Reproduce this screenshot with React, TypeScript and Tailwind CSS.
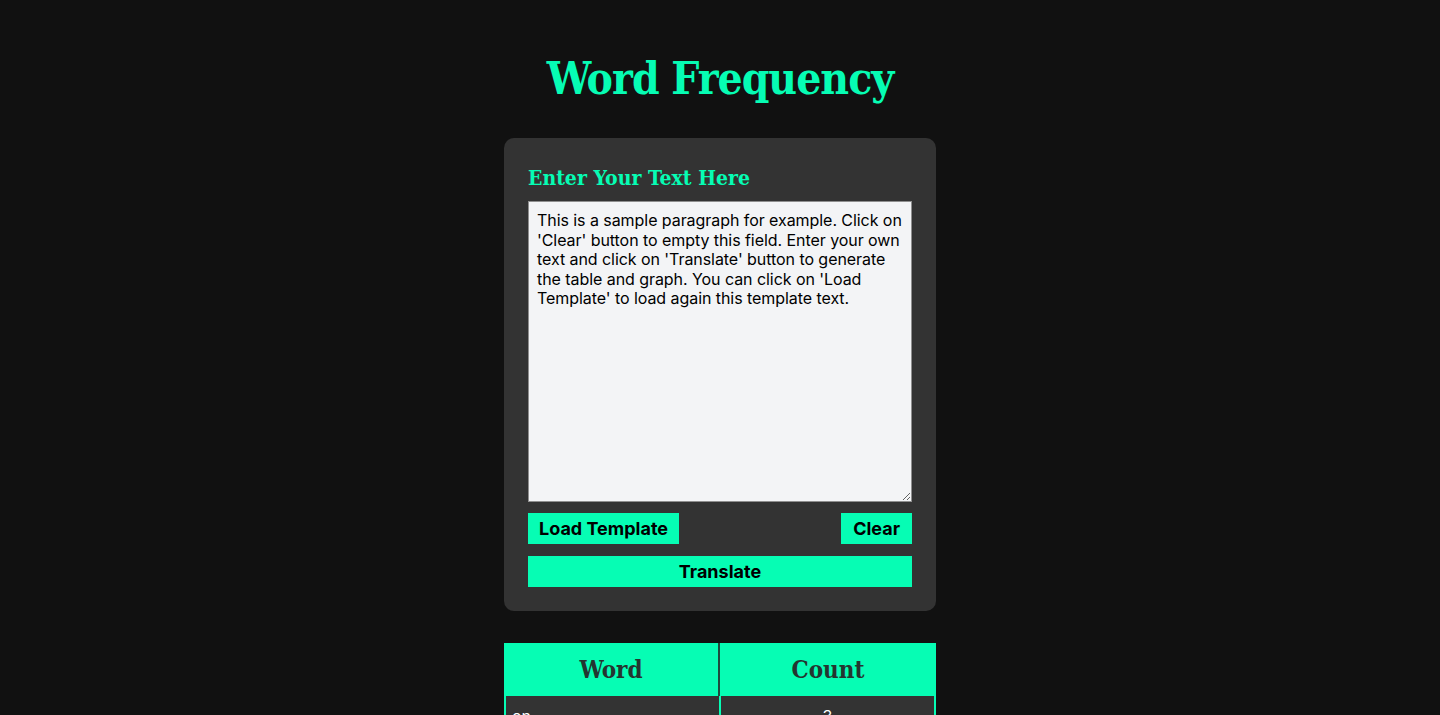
import React from "react";

const sample =
  "This is a sample paragraph for example. Click on 'Clear' button to empty this field. Enter your own text and click on 'Translate' button to generate the table and graph. You can click on 'Load Template' to load again this template text.";

const slab = "font-['DejaVu_Serif',serif] [font-stretch:condensed]";

export default function App() {
  return (
    <div className="min-h-screen bg-[#111111] font-['Inter',sans-serif] flex flex-col items-center pt-[50px]">
      <h1 className={`${slab} text-[#06fdb4] font-bold text-[44px] leading-[58px] tracking-[-1px]`}>
        Word Frequency
      </h1>

      <div className="mt-[30px] w-[432px] bg-[#333333] rounded-[10px] p-6">
        <h2 className={`${slab} text-[#06fdb4] font-bold text-[21px] leading-[28px] pt-[2px] -mb-[2px]`}>
          Enter Your Text Here
        </h2>
        <textarea
          defaultValue={sample}
          spellCheck={false}
          className="mt-[11px] block w-full h-[301px] bg-[#f3f4f6] text-black border border-[#8f8f8f] pl-2 pr-1 pt-[9px] pb-[7px] text-[16px] leading-[19.5px] tracking-[-0.06px] outline-none"
        />
        <div className="mt-[11px] flex justify-between">
          <button className="h-[31px] px-[11px] bg-[#06fdb4] text-black font-bold text-[18px]">Load Template</button>
          <button className="h-[31px] px-[12px] bg-[#06fdb4] text-black font-bold text-[18px]">Clear</button>
        </div>
        <button className="mt-3 w-full h-[31px] bg-[#06fdb4] text-black font-bold text-[18px]">Translate</button>
      </div>

      <div className="mt-8 w-[432px] bg-[#06fdb4]">
        <div className="grid grid-cols-2 h-[53px]">
          <div className={`${slab} border-r-2 border-[#1e4b3d] flex items-center justify-center font-bold text-[24px] text-[#243530]`}>
            Word
          </div>
          <div className={`${slab} flex items-center justify-center font-bold text-[24px] text-[#243530]`}>
            Count
          </div>
        </div>
        <div className="grid grid-cols-2 gap-[2px] px-[2px] pb-[2px]">
          <div className="bg-[#333333] text-white px-[6px] py-2 text-[16px]">on</div>
          <div className="bg-[#333333] text-white py-2 text-center text-[16px]">3</div>
        </div>
      </div>
    </div>
  );
}
